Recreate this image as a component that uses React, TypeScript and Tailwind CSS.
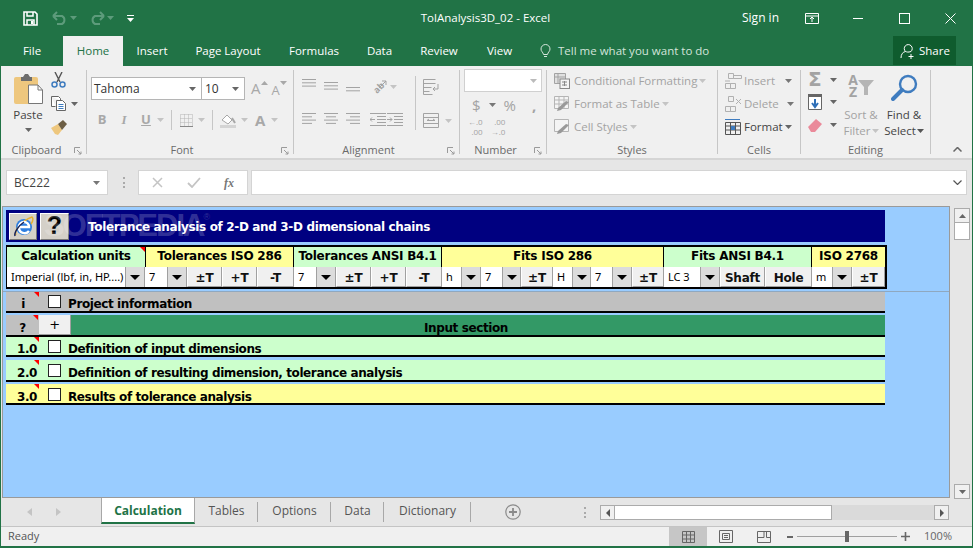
import type { ReactNode } from "react"

const ui = "font-['Open_Sans','Noto_Sans',sans-serif]"
const sheetFont = "font-['DejaVu_Sans','Noto_Sans',sans-serif]"

function Caret({ className = "", color = "#8a8a8a" }: { className?: string; color?: string }) {
    return (
        <svg width="7" height="4" viewBox="0 0 7 4" className={className}>
            <path d="M0 0h7L3.5 4z" fill={color} />
        </svg>
    )
}

function Launcher() {
    return (
        <svg width="8" height="8" viewBox="0 0 8 8" className="absolute right-[4px] top-[5px]">
            <path d="M0.5 6V0.5H6M3 3l4 4M7 4.5V7H4.5" fill="none" stroke="#9a9a9a" />
        </svg>
    )
}

function Sep() {
    return <div className="mt-[4px] h-[84px] w-px bg-[#c6c6c6] shrink-0" />
}

function Group({ label, width, launcher, labelPad = "", children }: { label: string; width: string; launcher?: boolean; labelPad?: string; children: ReactNode }) {
    return (
        <div className={`${width} h-full flex flex-col shrink-0`}>
            <div className="flex-1 min-h-0">{children}</div>
            <div className={`${labelPad} relative h-[16px] leading-[16px] text-center text-[11px] text-[#6a6a6a]`}>
                {label}
                {launcher && <Launcher />}
            </div>
        </div>
    )
}

function AlignLines({ rows }: { rows: [number, number][] }) {
    return (
        <svg width="14" height="11" viewBox="0 0 14 11">
            {rows.map(([x, w], i) => (
                <rect key={i} x={x} y={i * 3.3} width={w} height="1" fill="#a3a3a3" />
            ))}
        </svg>
    )
}

function StyleRow({ label, icon }: { label: string; icon: ReactNode }) {
    return (
        <div className="h-[23px] flex items-center">
            <div className="w-[20px] flex justify-start">{icon}</div>
            <span className="text-[11.5px] text-[#a3a3a3]">{label}</span>
            <Caret className="ml-[2px]" color="#c4c4c4" />
        </div>
    )
}

function CellRow({ label, dark, icon, caretMl }: { label: string; dark?: boolean; icon: ReactNode; caretMl: string }) {
    return (
        <div className="h-[23px] flex items-center">
            <div className="w-[19px]">{icon}</div>
            <span className={`text-[11.5px] ${dark ? "text-[#444]" : "text-[#a3a3a3]"}`}>{label}</span>
            <Caret className={caretMl} color={dark ? "#666" : "#777"} />
        </div>
    )
}

function Head({ w, bg, children, mark, last }: { w: string; bg: string; children: ReactNode; mark?: boolean; last?: boolean }) {
    return (
        <div className={`${w} ${bg} ${last ? "" : "border-r border-black"} relative h-full flex items-center justify-center pb-[3px] shrink-0 text-[12px] tracking-[-0.25px] font-bold text-black whitespace-nowrap`}>
            {children}
            {mark && <i className="absolute right-0 top-0 border-t-[5px] border-l-[5px] border-t-[#ff0000] border-l-transparent" />}
        </div>
    )
}

function Field({ w, text }: { w: string; text: string }) {
    return <div className={`${w} h-full bg-white flex items-center pl-[4px] text-[11px] text-black whitespace-nowrap overflow-hidden shrink-0 font-['Noto_Sans',sans-serif]`}>{text}</div>
}

function Drop({ w }: { w: string }) {
    return (
        <div className={`${w} h-full bg-[#dcdcdc] border-x border-[#a0a0a0] flex items-center justify-center shrink-0`}>
            <svg width="10" height="5" viewBox="0 0 10 5"><path d="M0 0h10L5 5z" fill="#000" /></svg>
        </div>
    )
}

function Btn({ w, text }: { w: string; text: string }) {
    return <div className={`${w} h-full bg-[#f0f0f0] border-r border-b border-[#a0a0a0] border-l border-l-white flex items-center justify-center pt-[2px] text-[12px] tracking-[-0.2px] font-bold text-[#111] shrink-0`}>{text}</div>
}

function Mark() {
    return <i className="absolute right-px top-0 border-t-[5px] border-l-[5px] border-t-[#ff0000] border-l-transparent" />
}

function Row({ num, title, bg, h, mt, checkPt, textPt }: { num: string; title: string; bg: string; h: string; mt: string; checkPt: string; textPt: string }) {
    return (
        <div className={`${bg} ${mt} ${h} box-content ml-[3px] w-[879px] border-b-2 border-black flex text-[12px] tracking-[-0.4px] font-bold text-black`}>
            <div className={`${textPt} relative w-[34px] h-full shrink-0 flex items-center justify-end pr-[3px]`}>
                <span className={num === "i" ? "pr-[12px]" : ""}>{num}</span>
                <Mark />
            </div>
            <div className={`${checkPt} w-[28px] shrink-0 flex pl-[8px]`}>
                <div className="w-[13px] h-[13px] bg-white border border-[#222]" />
            </div>
            <div className={`${textPt} flex items-center whitespace-nowrap`}>{title}</div>
        </div>
    )
}

function SheetTab({ w, label, sep }: { w: string; label: string; sep?: boolean }) {
    return (
        <div className={`${w} flex items-center justify-center pb-[2px] text-[12px] text-[#555] relative`}>
            {label}
            {sep && <div className="absolute right-0 top-[4px] h-[20px] w-px bg-[#a8a8a8]" />}
        </div>
    )
}

export default function App() {
    return (
        <div className={`${ui} w-[973px] h-[548px] overflow-hidden flex flex-col border-x border-b-2 border-[#217346] bg-[#e6e6e6]`}>
            {/* title bar */}
            <div className="h-[36px] bg-[#217346] grid grid-cols-[299px_1fr_301px] items-center text-white shrink-0">
                <div className="flex items-center pl-[22px]">
                    <svg width="15" height="15" viewBox="0 0 15 15">
                        <path d="M1 1h11l2 2v11H1z" fill="none" stroke="#fff" strokeWidth="1.6" />
                        <path d="M4 1v4h6V1M4 14V9h7v5" fill="none" stroke="#fff" strokeWidth="1.5" />
                        <rect x="8" y="10" width="2" height="3" fill="#fff" />
                    </svg>
                    <svg width="16" height="14" viewBox="0 0 16 14" className="ml-[14px]">
                        <path d="M1 5h9a4.5 4.5 0 0 1 0 8H5M1 5l4-4M1 5l4 4" fill="none" stroke="#5d9b7b" strokeWidth="2" />
                    </svg>
                    <Caret className="ml-[2px]" color="#5d9b7b" />
                    <svg width="16" height="14" viewBox="0 0 16 14" className="ml-[12px]">
                        <path d="M15 5H6a4.5 4.5 0 0 0 0 8h5M15 5l-4-4M15 5l-4 4" fill="none" stroke="#5d9b7b" strokeWidth="2" />
                    </svg>
                    <Caret className="ml-[2px]" color="#5d9b7b" />
                    <svg width="7" height="7" viewBox="0 0 7 7" className="ml-[13px]">
                        <path d="M0 0h7v1H0zM0 3h7L3.5 7z" fill="#fff" />
                    </svg>
                </div>
                <div className="text-center text-[11.5px]">TolAnalysis3D_02 - Excel</div>
                <div className="flex items-center pl-[71px]">
                    <span className="text-[12px]">Sign in</span>
                    <svg width="14" height="11" viewBox="0 0 14 11" className="ml-[26px]">
                        <path d="M.5.5h13v10H.5zM.5 3h13M7 9V4.5M5 6l2-2 2 2" fill="none" stroke="#fff" />
                    </svg>
                    <div className="ml-[34px] w-[10px] h-px bg-white" />
                    <div className="ml-[36px] w-[11px] h-[11px] border border-white" />
                    <svg width="11" height="11" viewBox="0 0 11 11" className="ml-[35px]">
                        <path d="M.5.5l10 10M10.5.5l-10 10" stroke="#fff" fill="none" />
                    </svg>
                </div>
            </div>

            {/* tabs */}
            <div className="h-[30px] bg-[#217346] flex items-center text-[11.5px] text-white shrink-0">
                <div className="w-[62px] text-center">File</div>
                <div className="w-[60px] h-full bg-[#f0f0f0] text-[#217346] flex items-center justify-center">Home</div>
                <div className="w-[58px] text-center">Insert</div>
                <div className="w-[94px] text-center">Page Layout</div>
                <div className="w-[78px] text-center">Formulas</div>
                <div className="w-[53px] text-center">Data</div>
                <div className="w-[66px] text-center">Review</div>
                <div className="w-[55px] text-center">View</div>
                <svg width="11" height="14" viewBox="0 0 11 14" className="ml-[13px]">
                    <path d="M3.5 10.5C3 8 1 7.5 1 5a4.5 4.5 0 0 1 9 0c0 2.5-2 3-2.5 5.5zM4 12.5h3" fill="none" stroke="#d7e6dd" />
                </svg>
                <span className="ml-[7px] text-[#d3e4da]">Tell me what you want to do</span>
                <div className="ml-auto mr-[16px] mb-px w-[63px] h-[29px] bg-[#0f5c2e] flex items-center pl-[7px] gap-[3px]">
                    <svg width="16" height="16" viewBox="0 0 16 16">
                        <path d="M1 15c0-4 2-6 4.5-6.5M11 8.5c-3 1-4 .5-5.5 0a4 4 0 1 1 5.5 0zM11 11v5M8.5 13.5h5" fill="none" stroke="#fff" />
                    </svg>
                    Share
                </div>
            </div>

            {/* ribbon */}
            <div className="h-[92px] bg-[#f0f0f0] border-b-2 border-[#d5d5d5] box-content flex text-[11.5px] shrink-0">
                <Group label="Clipboard" width="w-[85px]" labelPad="pr-[14px]" launcher>
                    <div className="flex pl-[12px]">
                        <div className="w-[30px] flex flex-col items-center pt-[8px]">
                            <svg width="29" height="30" viewBox="0 0 29 30">
                                <rect x="0" y="3" width="24" height="27" rx="2" fill="#eec77e" />
                                <path d="M7 3h2l2-3h3l2 3h2v4H7z" fill="#6d6d6d" />
                                <path d="M14.5 11H24l4.5 5v13.5h-14z" fill="#fff" stroke="#777" />
                                <path d="M24 11v5h4.5" fill="none" stroke="#777" />
                            </svg>
                            <span className="mt-[3px] text-[#444] leading-[16px]">Paste</span>
                            <Caret className="mt-[5px]" color="#666" />
                        </div>
                        <div className="ml-[8px] flex flex-col pt-[6px]">
                            <svg width="15" height="16" viewBox="0 0 15 16">
                                <path d="M4 0l5 10M11 0L6 10" stroke="#555" strokeWidth="1.4" fill="none" />
                                <circle cx="3.5" cy="12.5" r="2.5" fill="none" stroke="#3f7cbf" strokeWidth="1.5" />
                                <circle cx="11.5" cy="12.5" r="2.5" fill="none" stroke="#3f7cbf" strokeWidth="1.5" />
                            </svg>
                            <div className="mt-[8px] flex items-center">
                                <svg width="16" height="15" viewBox="0 0 16 15">
                                    <path d="M.5.5h7l2 2v2M.5.5v10h4" fill="#fff" stroke="#666" />
                                    <path d="M5.5 4.5h6l3 3v7h-9z" fill="#fff" stroke="#666" />
                                    <path d="M7.5 8.5h5M7.5 10.5h5M7.5 12.5h5" stroke="#3f7cbf" />
                                </svg>
                                <Caret className="ml-[4px]" color="#666" />
                            </div>
                            <svg width="16" height="15" viewBox="0 0 16 15" className="mt-[9px]">
                                <path d="M0 8l7-4 4 6-4 5-3-1z" fill="#eec77e" />
                                <path d="M7 4l5-4 4 4-5 6z" fill="#6d5f45" />
                            </svg>
                        </div>
                    </div>
                </Group>
                <Sep />
                <Group label="Font" width="w-[206px]" labelPad="pr-[16px]" launcher>
                    <div className="pl-[4px] pt-[11px]">
                        <div className="flex">
                            <div className="w-[111px] h-[23px] bg-white border border-[#b5b5b5] flex items-center justify-between pl-[2px] pr-[5px] text-[#333] text-[12px]">
                                Tahoma
                                <Caret color="#666" />
                            </div>
                            <div className="w-[43px] h-[23px] bg-white border border-[#b5b5b5] border-l-0 flex items-center justify-between pl-[3px] pr-[5px] text-[#333] text-[12px]">
                                10
                                <Caret color="#666" />
                            </div>
                            <span className="ml-[6px] text-[15px] leading-[23px] text-[#a8a8a8]">A</span>
                            <Caret className="mt-[4px] rotate-180" color="#a8a8a8" />
                            <span className="ml-[4px] mt-[2px] text-[13px] leading-[23px] text-[#a8a8a8]">A</span>
                            <Caret className="mt-[4px]" color="#a8a8a8" />
                        </div>
                        <div className="flex items-center h-[20px] mt-[8px] pl-[6px] text-[#a8a8a8] font-bold text-[13px]">
                            <span className="w-[10px] text-center">B</span>
                            <span className="ml-[12px] w-[10px] text-center italic font-['Liberation_Serif',serif]">I</span>
                            <span className="ml-[12px] w-[10px] text-center underline">U</span>
                            <Caret className="ml-[6px]" color="#c4c4c4" />
                            <div className="ml-[7px] h-[20px] w-px bg-[#c6c6c6]" />
                            <svg width="13" height="13" viewBox="0 0 13 13" className="ml-[8px]">
                                <path d="M.5.5h12v12H.5zM4.5.5v12M8.5.5v12M.5 4.5h12M.5 8.5h12" stroke="#b5b5b5" strokeDasharray="1 1" fill="none" />
                                <path d="M0 12.5h13" stroke="#888" />
                            </svg>
                            <Caret className="ml-[5px]" color="#c4c4c4" />
                            <div className="ml-[7px] h-[20px] w-px bg-[#c6c6c6]" />
                            <svg width="16" height="15" viewBox="0 0 16 15" className="ml-[7px]">
                                <path d="M2 7l5-5 5 5-4 4z" fill="#fff" stroke="#a8a8a8" />
                                <path d="M12 5l3 5" stroke="#a8a8a8" strokeWidth="2" />
                                <rect x="0" y="12" width="16" height="3" fill="#d4d4d4" />
                            </svg>
                            <Caret className="ml-[5px]" color="#c4c4c4" />
                            <span className="ml-[7px] text-[15px]">A</span>
                            <Caret className="ml-[6px]" color="#c4c4c4" />
                        </div>
                    </div>
                </Group>
                <Sep />
                <Group label="Alignment" width="w-[165px]" labelPad="pr-[16px]" launcher>
                    <div className="flex pl-[8px] pt-[13px]">
                        <div className="w-[66px]">
                            <div className="flex gap-[8px] h-[16px] items-start">
                                <AlignLines rows={[[0, 14], [0, 14], [0, 14]]} />
                                <div className="pt-[3px]"><AlignLines rows={[[0, 14], [0, 14], [0, 14]]} /></div>
                                <div className="pt-[8px]"><AlignLines rows={[[0, 14], [0, 14]]} /></div>
                            </div>
                            <div className="flex gap-[8px] mt-[18px]">
                                <AlignLines rows={[[0, 14], [0, 10], [0, 14], [0, 10]]} />
                                <AlignLines rows={[[0, 14], [2, 10], [0, 14], [2, 10]]} />
                                <AlignLines rows={[[0, 14], [4, 10], [0, 14], [4, 10]]} />
                            </div>
                        </div>
                        <div className="ml-[2px] w-[45px]">
                            <div className="flex items-center h-[16px]">
                                <div className="relative w-[17px] h-[16px] flex items-center justify-center">
                                    <span className="-rotate-45 text-[9px] leading-[9px] font-bold text-[#a3a3a3]">ab</span>
                                    <svg width="9" height="9" viewBox="0 0 9 9" className="absolute right-0 top-[1px]">
                                        <path d="M1 8l7-7M4 1h4v4" stroke="#a3a3a3" fill="none" />
                                    </svg>
                                </div>
                                <Caret className="ml-[3px]" color="#c4c4c4" />
                            </div>
                            <div className="flex gap-[1px] mt-[18px]">
                                <svg width="16" height="13" viewBox="0 0 16 13"><path d="M0 .5h16M0 12.5h16M7 3.5h9M7 6.5h9M7 9.5h9M5 6.5H0M2 4.5l-2 2 2 2" stroke="#a3a3a3" fill="none" /></svg>
                                <svg width="16" height="13" viewBox="0 0 16 13"><path d="M0 .5h16M0 12.5h16M7 3.5h9M7 6.5h9M7 9.5h9M0 6.5h5M3 4.5l2 2-2 2" stroke="#a3a3a3" fill="none" /></svg>
                            </div>
                        </div>
                        <div className="h-[54px] w-px bg-[#c6c6c6] -mt-[3px]" />
                        <div className="ml-[7px]">
                            <svg width="16" height="16" viewBox="0 0 16 16"><path d="M.5.5h12M.5 4.5h12v0M.5 8.5h8M.5 12.5h6M.5.5v15h9M15 5v5h-5M12 8l-2 2 2 2" stroke="#a3a3a3" fill="none" /></svg>
                            <div className="flex items-center mt-[18px]">
                                <svg width="16" height="15" viewBox="0 0 16 15"><path d="M.5.5h15v14H.5zM.5 4.5h15M.5 10.5h15M4 7.5h8M4 7.5l2-1.500M12 7.500l-2-1.500" stroke="#a3a3a3" fill="none" /></svg>
                                <Caret className="ml-[6px]" color="#c4c4c4" />
                            </div>
                        </div>
                    </div>
                </Group>
                <Sep />
                <Group label="Number" width="w-[86px]" labelPad="pr-[15px]" launcher>
                    <div className="pl-[4px] pt-[3px]">
                        <div className="w-[78px] h-[23px] bg-white border border-[#d0d0d0] flex items-center justify-end pr-[4px]">
                            <Caret color="#bbb" />
                        </div>
                        <div className="flex items-center h-[24px] mt-[1px] pl-[8px] text-[#a3a3a3] text-[15px]">
                            <span>$</span>
                            <Caret className="ml-[8px]" color="#777" />
                            <span className="ml-[8px]">%</span>
                            <span className="ml-[16px] font-bold">,</span>
                        </div>
                        <div className="flex items-center pl-[4px] gap-[8px] text-[8px] leading-[10px] text-[#a3a3a3]">
                            <span className="text-right">&larr;.0<br />.00</span>
                            <span className="text-right">.00<br />&rarr;.0</span>
                        </div>
                    </div>
                </Group>
                <Sep />
                <Group label="Styles" width="w-[170px]">
                    <div className="pl-[7px] pt-[3px]">
                        <StyleRow label="Conditional Formatting" icon={
                            <svg width="16" height="16" viewBox="0 0 16 16"><path d="M.5.5h11v10H.500zM.5 4h11M4 .5v10" stroke="#a3a3a3" fill="#e0e0e0" /><rect x="6" y="6" width="9.500" height="9.500" fill="#f4f4f4" stroke="#888" /><path d="M8 9h5M8 12h5M10.500 8v5" stroke="#888" /></svg>
                        } />
                        <StyleRow label="Format as Table" icon={
                            <svg width="16" height="16" viewBox="0 0 16 16"><path d="M.5.5h14v12H.5zM.5 4h14M.5 8h14M5 .5v12M10 .5v12" stroke="#b5b5b5" fill="#f4f4f4" /><path d="M3 15l4-1 8-8-3-1-8 7z" fill="#999" /></svg>
                        } />
                        <StyleRow label="Cell Styles" icon={
                            <svg width="16" height="16" viewBox="0 0 16 16"><path d="M.5.5h14v12H.5z" stroke="#b5b5b5" fill="#f4f4f4" /><path d="M3 15l4-1 8-8-3-1-8 7z" fill="#999" /></svg>
                        } />
                    </div>
                </Group>
                <Sep />
                <Group label="Cells" width="w-[82px]">
                    <div className="pl-[7px] pt-[3px]">
                        <CellRow label="Insert" caretMl="ml-[10px]" icon={
                            <svg width="17" height="16" viewBox="0 0 17 16"><path d="M3.500.5h5v5h-5zM.5 10.500h5v5h-5zM5.500 10.500h5v5h-5zM8.500 5.500h8v-3h-8zM5 8H0" stroke="#b0b0b0" fill="none" /></svg>
                        } />
                        <CellRow label="Delete" caretMl="ml-[8px]" icon={
                            <svg width="17" height="16" viewBox="0 0 17 16"><path d="M3.500.5h5v5h-5zM.5 10.500h5v5h-5zM5.500 10.500h5v5h-5zM11 3l5 5M16 3l-5 5" stroke="#b0b0b0" fill="none" /></svg>
                        } />
                        <CellRow label="Format" dark caretMl="ml-[2px]" icon={
                            <svg width="16" height="16" viewBox="0 0 16 16"><path d="M0 .5h15M.5 3.500h15v12H.5zM.5 7h15M.5 11h15M5.500 3.500v12M10.500 3.500v12" stroke="#555" fill="none" /><path d="M0 .5h15" stroke="#3f7cbf" /><rect x="6" y="7" width="4" height="4" fill="#3f7cbf" /></svg>
                        } />
                    </div>
                </Group>
                <Sep />
                <Group label="Editing" width="w-[129px]">
                    <div className="flex pl-[7px] pt-[5px]">
                        <div className="w-[38px] flex flex-col">
                            <div className="flex items-center h-[17px]">
                                <span className="w-[16px] text-[20px] leading-[17px] font-bold text-[#a3a3a3] font-['DejaVu_Sans',sans-serif]">Σ</span>
                                <Caret className="ml-[6px]" color="#666" />
                            </div>
                            <div className="flex items-center mt-[6px] h-[16px]">
                                <svg width="14" height="16" viewBox="0 0 14 16"><path d="M.5.5h13v15H.5z" fill="#fff" stroke="#666" /><rect x="0" y="0" width="14" height="3" fill="#666" /><path d="M7 5v8M4 9l3 4 3-4" stroke="#2f6fb7" strokeWidth="2" fill="none" /></svg>
                                <Caret className="ml-[8px]" color="#666" />
                            </div>
                            <div className="flex items-center mt-[7px] h-[16px]">
                                <svg width="14" height="13" viewBox="0 0 14 13"><path d="M0 8l8-8 6 5-7 8H3z" fill="#ea8a9a" /></svg>
                                <Caret className="ml-[8px]" color="#666" />
                            </div>
                        </div>
                        <div className="w-[40px] flex flex-col items-center -ml-[5px] pt-[3px] text-[#a3a3a3] leading-[16px]">
                            <div className="h-[26px] flex items-start font-bold text-[14px] leading-[12px]">
                                <span className="text-center">A<br />Z</span>
                                <svg width="16" height="16" viewBox="0 0 16 16" className="mt-[6px]"><path d="M0 0h16l-6 7v8H6V7z" fill="#b5b5b5" /></svg>
                            </div>
                            <span className="mt-[7px] whitespace-nowrap">Sort &amp;</span>
                            <span className="flex items-center whitespace-nowrap">Filter<Caret className="ml-[1px]" color="#c4c4c4" /></span>
                        </div>
                        <div className="w-[46px] flex flex-col items-center pt-[3px] text-[#444] leading-[16px]">
                            <svg width="27" height="27" viewBox="0 0 27 27">
                                <circle cx="17" cy="10" r="8" fill="none" stroke="#3f7cbf" strokeWidth="2.400" />
                                <path d="M11 16L2 25" stroke="#3f7cbf" strokeWidth="4" strokeLinecap="round" />
                            </svg>
                            <span className="mt-[6px] whitespace-nowrap">Find &amp;</span>
                            <span className="flex items-center whitespace-nowrap">Select<Caret className="ml-[1px]" color="#555" /></span>
                        </div>
                    </div>
                </Group>
                <Sep />
                <div className="flex-1 flex items-end justify-end pb-[6px] pr-[10px]">
                    <svg width="9" height="5" viewBox="0 0 9 5"><path d="M.5 4.500l4-4 4 4" stroke="#666" strokeWidth="1.500" fill="none" /></svg>
                </div>
            </div>

            {/* formula bar */}
            <div className="h-[46px] flex items-start pt-[10px] pl-[5px] shrink-0 text-[12px] text-[#444]">
                <div className="w-[102px] h-[25px] bg-white border border-[#d4d4d4] flex items-center justify-between pl-[7px] pr-[7px]">
                    BC222
                    <Caret color="#777" />
                </div>
                <div className="ml-[15px] mt-[7px] w-[2px] h-[11px] border-l-2 border-dotted border-[#aaa]" />
                <div className="ml-[13px] w-[110px] h-[25px] bg-white border border-[#d4d4d4] flex items-center">
                    <svg width="11" height="11" viewBox="0 0 11 11" className="ml-[13px]"><path d="M1 1l9 9M10 1l-9 9" stroke="#c4c4c4" strokeWidth="1.500" /></svg>
                    <svg width="14" height="11" viewBox="0 0 14 11" className="ml-[24px]"><path d="M1 6l4 4 8-9" stroke="#c4c4c4" strokeWidth="1.800" fill="none" /></svg>
                    <span className="ml-[23px] italic font-bold text-[12px] text-[#777] font-['Liberation_Serif',serif]">fx</span>
                </div>
                <div className="ml-[3px] w-[716px] h-[25px] bg-white border border-[#d4d4d4] flex items-center justify-end pr-[4px]">
                    <svg width="9" height="5" viewBox="0 0 9 5"><path d="M.5.5l4 4 4-4" stroke="#555" strokeWidth="1.200" fill="none" /></svg>
                </div>
            </div>

            {/* sheet + vertical scrollbar */}
            <div className="h-[292px] flex shrink-0">
                <div className={`${sheetFont} relative ml-px w-[948px] h-full bg-[#99ccff] border border-[#9a9a9a] overflow-hidden`}>
                    <div className="relative ml-[3px] mt-[3px] w-[879px] h-[32px] bg-[#000080] flex items-center pl-[3px] gap-[3px]">
                        <div className="w-[28px] h-[27px] bg-[#d4d0c8] border border-white border-r-[#777] border-b-[#777] flex items-center justify-center">
                            <svg width="23" height="23" viewBox="0 0 23 23">
                                <circle cx="12" cy="12" r="8" fill="#2f7fe0" />
                                <path d="M4 20C2 16 9 6 20 2c2 2 1 4-1 7" fill="none" stroke="#e8b030" strokeWidth="1.500" />
                                <path d="M7 12h10a5 5 0 0 0-10 0zM7 13c0 5 7 7 10 3" fill="none" stroke="#fff" strokeWidth="2.400" />
                                <path d="M3 21c-1-3 3-10 9-14" fill="none" stroke="#12205c" strokeWidth="1.500" />
                            </svg>
                        </div>
                        <div className="w-[29px] h-[27px] bg-[#d4d0c8] border border-white border-r-[#777] border-b-[#777] flex items-center justify-center text-[25px] font-bold text-black font-['Liberation_Sans',sans-serif]">?</div>
                        <span className="ml-[16px] pt-px text-[12px] tracking-[-0.35px] font-bold text-white whitespace-nowrap">Tolerance analysis of 2-D and 3-D dimensional chains</span>
                        <span className="absolute left-[38px] top-0 text-[31px] font-bold leading-[32px] tracking-[-2px] text-white/20 whitespace-nowrap font-['Liberation_Sans',sans-serif]">SOFTPEDIA<span className="align-top text-[9px] leading-[14px] tracking-normal font-normal">®</span></span>
                    </div>

                    <div className="ml-[3px] mt-[3px] w-[881px] h-[44px] border-y-2 border-r-2 border-l border-black bg-black flex flex-col">
                        <div className="h-[20px] flex">
                            <Head w="w-[139px]" bg="bg-[#ccffcc]" mark>Calculation units</Head>
                            <Head w="w-[148px]" bg="bg-[#ffff99]">Tolerances ISO 286</Head>
                            <Head w="w-[148px]" bg="bg-[#ccffcc]">Tolerances ANSI B4.1</Head>
                            <Head w="w-[222px]" bg="bg-[#ffff99]">Fits ISO 286</Head>
                            <Head w="w-[148px]" bg="bg-[#ccffcc]">Fits ANSI B4.1</Head>
                            <Head w="w-[73px]" bg="bg-[#ffff99]" last>ISO 2768</Head>
                        </div>
                        <div className="h-[20px] flex bg-[#f0f0f0]">
                            <Field w="w-[118px]" text="Imperial (lbf, in, HP....)" />
                            <Drop w="w-[20px]" />
                            <Field w="w-[22px]" text="7" />
                            <Drop w="w-[20px]" />
                            <Btn w="w-[35px]" text="±T" />
                            <Btn w="w-[35px]" text="+T" />
                            <Btn w="w-[37px]" text="-T" />
                            <Field w="w-[22px]" text="7" />
                            <Drop w="w-[20px]" />
                            <Btn w="w-[35px]" text="±T" />
                            <Btn w="w-[35px]" text="+T" />
                            <Btn w="w-[36px]" text="-T" />
                            <Field w="w-[19px]" text="h" />
                            <Drop w="w-[20px]" />
                            <Field w="w-[21px]" text="7" />
                            <Drop w="w-[19px]" />
                            <Btn w="w-[32px]" text="±T" />
                            <Field w="w-[19px]" text="H" />
                            <Drop w="w-[19px]" />
                            <Field w="w-[21px]" text="7" />
                            <Drop w="w-[20px]" />
                            <Btn w="w-[32px]" text="±T" />
                            <Field w="w-[36px]" text="LC 3" />
                            <Drop w="w-[20px]" />
                            <Btn w="w-[45px]" text="Shaft" />
                            <Btn w="w-[47px]" text="Hole" />
                            <Field w="w-[20px]" text="m" />
                            <Drop w="w-[20px]" />
                            <Btn w="w-[33px]" text="±T" />
                        </div>
                    </div>

                    <div className="mt-[2px] h-px bg-[#8fa8c0]" />
                    <Row num="i" title="Project information" bg="bg-[#c0c0c0]" h="h-[19px]" mt="mt-0" checkPt="pt-[3px]" textPt="pt-[4px]" />
                    <div className="mt-[2px] ml-[3px] w-[879px] h-[22px] border-b-2 border-black flex bg-[#339966] text-[12px] tracking-[-0.4px] font-bold text-black">
                        <div className="relative w-[33px] h-full bg-[#c0c0c0] shrink-0 flex items-center justify-center pt-[5px]">
                            ?
                            <Mark />
                        </div>
                        <div className="w-[32px] h-full bg-[#f0f0f0] border-r border-b border-[#a0a0a0] flex items-center justify-center font-normal shrink-0 text-[13px]">+</div>
                        <div className="flex-1 text-center pr-[24px] pt-[4px]">Input section</div>
                    </div>
                    <Row num="1.0" title="Definition of input dimensions" bg="bg-[#ccffcc]" h="h-[18px]" mt="mt-0" checkPt="pt-[3px]" textPt="pt-[6px]" />
                    <Row num="2.0" title="Definition of resulting dimension, tolerance analysis" bg="bg-[#ccffcc]" h="h-[20px]" mt="mt-[3px]" checkPt="pt-[4px]" textPt="pt-[6px]" />
                    <Row num="3.0" title="Results of tolerance analysis" bg="bg-[#ffff99]" h="h-[19px]" mt="mt-[2px]" checkPt="pt-[4px]" textPt="pt-[6px]" />
                </div>
                <div className="flex-1 flex flex-col items-center pt-[2px] pl-[2px]">
                    <div className="w-[16px] h-[15px] bg-[#f0f0f0] border border-[#ababab] flex items-center justify-center">
                        <Caret className="rotate-180" color="#666" />
                    </div>
                    <div className="w-[16px] h-[17px] bg-white border border-t-0 border-[#ababab]" />
                    <div className="flex-1" />
                    <div className="w-[16px] h-[15px] bg-[#f0f0f0] border border-[#ababab] flex items-center justify-center mb-[-1px]">
                        <Caret color="#666" />
                    </div>
                </div>
            </div>

            {/* sheet tabs */}
            <div className="h-[28px] flex items-start border-b border-[#c4c4c4] box-content shrink-0">
                <div className="w-[100px] h-full flex items-center pl-[26px] gap-[24px]">
                    <svg width="5" height="8" viewBox="0 0 5 8"><path d="M5 0v8L0 4z" fill="#c4c4c4" /></svg>
                    <svg width="5" height="8" viewBox="0 0 5 8"><path d="M0 0v8l5-4z" fill="#c4c4c4" /></svg>
                </div>
                <div className="w-[92px] h-[22px] pt-[2px] bg-white border-x border-[#a8a8a8] flex items-center justify-center text-[12px] font-bold text-[#217346] box-content border-b-2 border-b-[#217346]">Calculation</div>
                <SheetTab w="w-[63px] h-[28px]" label="Tables" sep />
                <SheetTab w="w-[73px] h-[28px]" label="Options" sep />
                <SheetTab w="w-[53px] h-[28px]" label="Data" sep />
                <SheetTab w="w-[87px] h-[28px]" label="Dictionary" sep />
                <svg width="16" height="16" viewBox="0 0 16 16" className="ml-[34px] mt-[6px]">
                    <circle cx="8" cy="8" r="7.200" fill="none" stroke="#8a8a8a" strokeWidth="1.200" />
                    <path d="M8 4v8M4 8h8" stroke="#8a8a8a" strokeWidth="1.800" />
                </svg>
                <div className="ml-[63px] mt-[9px] w-[2px] h-[11px] border-l-2 border-dotted border-[#aaa]" />
                <div className="ml-[14px] mt-[7px] w-[349px] h-[15px] bg-[#dadada] flex">
                    <div className="w-[15px] h-full bg-[#f0f0f0] border border-[#ababab] flex items-center justify-center">
                        <svg width="4" height="8" viewBox="0 0 4 8"><path d="M4 0v8L0 4z" fill="#555" /></svg>
                    </div>
                    <div className="w-[217px] h-full bg-white border border-l-0 border-[#ababab]" />
                    <div className="flex-1" />
                    <div className="w-[15px] h-full bg-[#f0f0f0] border border-[#ababab] flex items-center justify-center">
                        <svg width="4" height="8" viewBox="0 0 4 8"><path d="M0 0v8l4-4z" fill="#555" /></svg>
                    </div>
                </div>
            </div>

            {/* status bar */}
            <div className="flex-1 bg-[#f0f0f0] flex items-center text-[11px] text-[#555]">
                <span className="pl-[7px]">Ready</span>
                <div className="ml-auto h-full w-[38px] bg-[#c6c6c6] flex items-center justify-center">
                    <svg width="13" height="12" viewBox="0 0 13 12"><path d="M.5.500h12v11H.5zM4.500.500v11M8.500.500v11M.5 4h12M.5 8h12" stroke="#666" fill="none" /></svg>
                </div>
                <div className="w-[38px] flex justify-center">
                    <svg width="14" height="13" viewBox="0 0 14 13"><path d="M.5.500h13v12H.5zM3.500 3.500h7v6h-7zM5 5.500h4M5 7.500h4" stroke="#666" fill="none" /></svg>
                </div>
                <div className="w-[38px] flex justify-center">
                    <svg width="14" height="12" viewBox="0 0 14 12"><path d="M.5.500h13v11H.5zM7 .5v6H.5M9.500.500v6h4" stroke="#666" fill="none" /></svg>
                </div>
                <div className="ml-[4px] w-[6px] h-[2px] bg-[#666]" />
                <div className="relative ml-[4px] w-[100px] h-px bg-[#a0a0a0]">
                    <div className="absolute left-[48px] top-[-5px] w-[4px] h-[11px] bg-[#666]" />
                </div>
                <svg width="9" height="9" viewBox="0 0 9 9" className="ml-[4px]"><path d="M4.500 0v9M0 4.500h9" stroke="#666" strokeWidth="1.600" /></svg>
                <span className="ml-[14px] mr-[20px] text-[11px] text-[#666]">100%</span>
            </div>
        </div>
    )
}
